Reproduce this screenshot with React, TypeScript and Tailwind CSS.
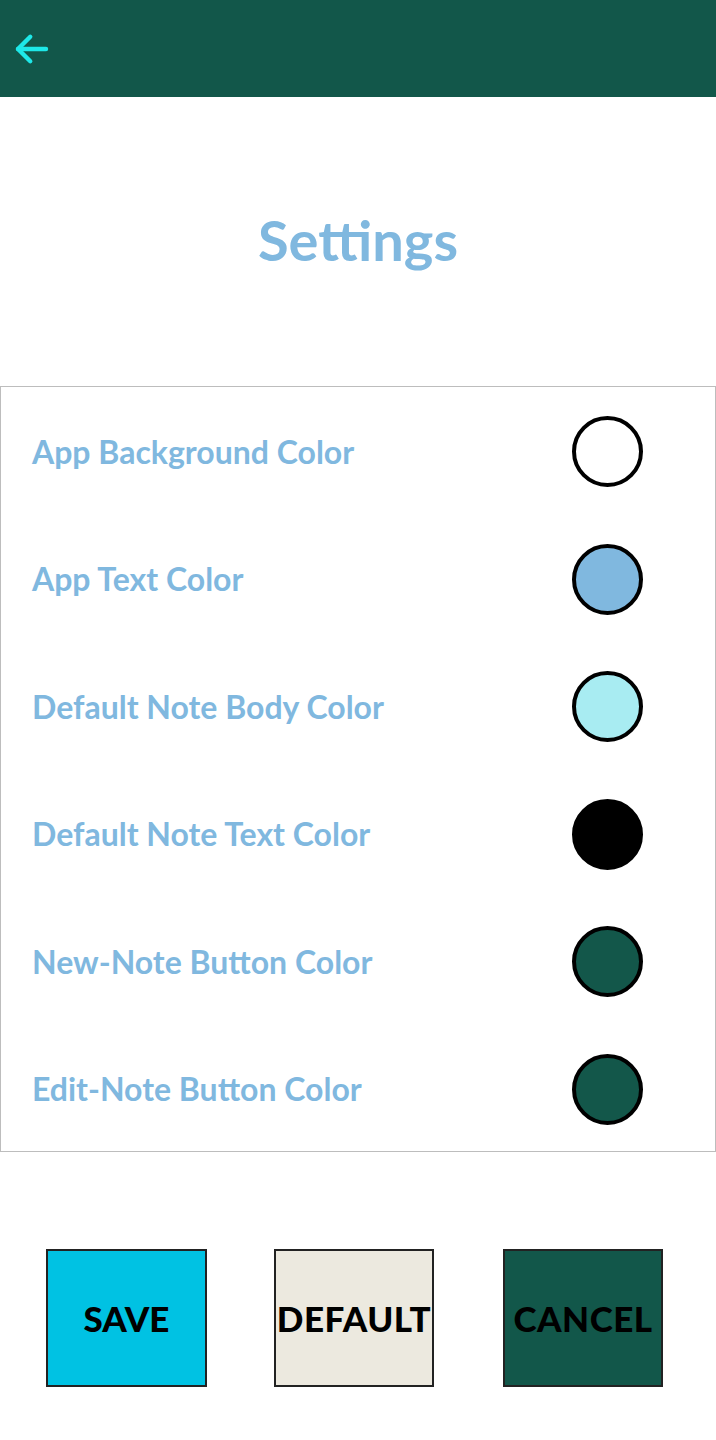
import React from "react";

const rows = [
  { label: "App Background Color", color: "bg-white" },
  { label: "App Text Color", color: "bg-[#80b8df]" },
  { label: "Default Note Body Color", color: "bg-[#a8ecf2]" },
  { label: "Default Note Text Color", color: "bg-black" },
  { label: "New-Note Button Color", color: "bg-[#13574a]" },
  { label: "Edit-Note Button Color", color: "bg-[#13574a]" },
];

export default function App() {
  return (
    <div className="w-[716px] h-[1440px] bg-white flex flex-col" style={{ fontFamily: "Lato, 'Noto Sans', sans-serif" }}>
      <header className="h-[97px] bg-[#12574a] flex items-center pl-[11px]">
        <svg width="42" height="42" viewBox="0 0 24 24" fill="none" stroke="#1ee8e8" strokeWidth="2.5" strokeLinecap="round" strokeLinejoin="round">
          <path d="M20 12H4" />
          <path d="M11 5l-7 7 7 7" />
        </svg>
      </header>
      <div className="h-[289px] flex items-center justify-center">
        <h1 className="text-[#80b8df] font-bold text-[56px] leading-none pb-[4px]">Settings</h1>
      </div>
      <div className="border border-[#bdbdbd] pt-[1px] h-[766px]">
        {rows.map((r) => (
          <div key={r.label} className="h-[127.5px] flex items-center justify-between pl-[31px] pr-[72px]">
            <span className="text-[#80b8df] font-bold text-[32px] leading-none">{r.label}</span>
            <div className={`w-[71px] h-[71px] rounded-full border-[4.5px] border-black ${r.color}`} />
          </div>
        ))}
      </div>
      <div className="flex px-[46px] pt-[97px]">
        <button className="w-[161px] h-[138px] bg-[#00c2e3] border-2 border-[#222] text-black font-black text-[35px]">SAVE</button>
        <button className="ml-[67px] w-[160px] h-[138px] bg-[#ece9df] border-2 border-[#222] text-black font-black text-[35px] tracking-[0.5px]">DEFAULT</button>
        <button className="ml-[69px] w-[160px] h-[138px] bg-[#12574a] border-2 border-[#222] text-black font-black text-[35px] tracking-[0.5px]">CANCEL</button>
      </div>
    </div>
  );
}
